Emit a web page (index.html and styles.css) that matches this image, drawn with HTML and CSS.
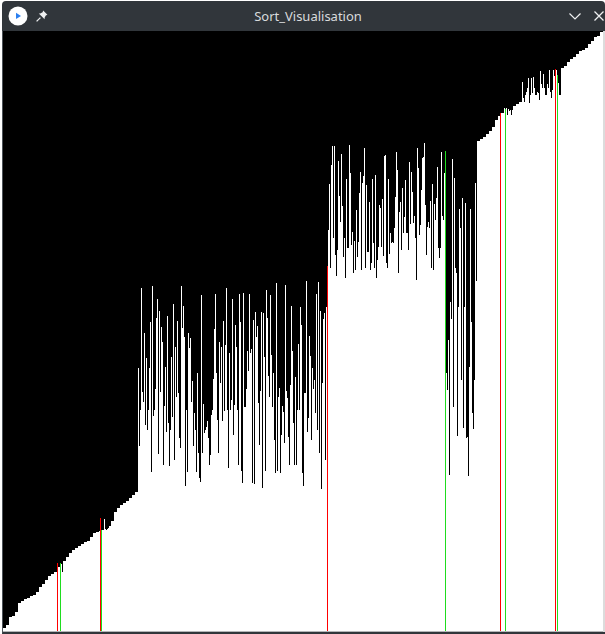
FILE: index.html

```html
<!DOCTYPE html>
<html lang="en">
<head>
    <meta charset="UTF-8">
    <title>Sort_Visualisation</title>
    <link rel="stylesheet" href="styles.css">
</head>
<body>

    <div class="window">
        <div class="titlebar">
            <div class="titlebar-left">
                <svg class="app-icon" width="20" height="20" viewBox="0 0 20 20">
                    <circle cx="10" cy="10" r="9.5" fill="#fff"/>
                    <path d="M8 6.8 L13 10 L8 13 Z" fill="#2b7ff0"/>
                </svg>
                <svg class="pin-icon" width="12" height="12" viewBox="0 0 12 12">
                    <path d="M7.2 .6 L11.4 4.8 L9.8 5.4 L8.6 7.8 L8.6 9.2 L2.8 3.4 L4.2 3.4 L6.6 2.2 Z" fill="#eff0f1"/>
                    <path d="M4.4 7.6 L.6 11.4" stroke="#eff0f1" stroke-width="1.3" fill="none"/>
                </svg>
            </div>
            <div class="title">Sort_Visualisation</div>
            <div class="titlebar-right">
                <svg width="12" height="7" viewBox="0 0 12 7">
                    <path d="M.5 .5 L6 6 L11.5 .5" stroke="#eff0f1" stroke-width="1.2" fill="none"/>
                </svg>
                <svg width="10" height="10" viewBox="0 0 10 10">
                    <path d="M.5 .5 L9.5 9.5 M9.5 .5 L.5 9.5" stroke="#eff0f1" stroke-width="1.3" fill="none"/>
                </svg>
            </div>
        </div>
        <div class="content">
            <div class="chart" id="chart"></div>
        </div>
    </div>

    <script src="script.js"></script>
</body>
</html>
```

FILE: styles.css

```css
html, body {
    margin: 0;
    padding: 0;
    height: 634px;
    overflow: hidden;
    background-color: #fff;
}
body {
    padding: 1px 0 0 2px;
    box-sizing: border-box;
}
.window {
    height: 633px;
    display: flex;
    flex-direction: column;
    background-color: #31363b;
    border-radius: 4px 4px 0 0;
}
.titlebar {
    height: 30px;
    display: grid;
    grid-template-columns: 60px 1fr 51px;
    align-items: center;
    color: #d9dbdd;
}
.titlebar-left {
    display: flex;
    align-items: center;
    padding-left: 6px;
    gap: 8px;
}
.titlebar-right {
    display: flex;
    align-items: center;
    justify-content: flex-end;
    gap: 13px;
    padding-right: 1px;
}
.title {
    text-align: center;
    font-family: "Noto Sans", sans-serif;
    font-size: 13px;
}
.content {
    height: 601px;
    display: flex;
    background-color: #dcdcdc;
    border-left: 1px solid #4d5359;
    border-bottom: 2px solid #31363b;
}
.chart {
    width: 600px;
    height: 600px;
    display: flex;
    align-items: flex-end;
    background-color: #000;
    border-bottom: 1px solid #b4b6b8;
}
.bar {
    width: 1px;
    flex: none;
    background-color: #fff;
}
.bar.red {
    background-color: #f00;
}
.bar.green {
    background-color: #1fdc1f;
}
```

FILE: script.js

```js
// top y of each column, read off the picture
const FIRST = 3, LAST = 602, BOTTOM = 631;

const stairs = [
    [3,628],[5,626],[8,622],[9,617],[13,615],[17,608],[18,603],[22,600],[28,597],[35,594],[38,588],[43,583],
    [48,576],[55,571],[58,565],[61,563],[65,558],[70,552],[75,548],[82,543],[88,540],[93,533],[103,530],
    [110,525],[113,513],[118,507],[127,500],[137,490],
    [477,141],[483,137],[488,132],[492,127],[495,120],[499,115],[502,112],[504,108],[510,110],[512,107],[518,103],
    [525,95],[558,95],[559,70],[565,65],[568,61],[573,57],[578,52],[585,48],[590,42],[593,38],[598,35],[600,32],[602,31]
];

const spikes = {
    62:572,104:519,106:530,108:528,
    507:115,509:111,511:115,522:82,524:102,526:92,527:88,528:78,529:103,531:78,532:93,533:77,534:88,537:92,538:93,
    539:100,540:71,541:84,542:88,543:74,544:88,547:84,548:88,549:70,550:92,551:98,552:90,553:70,554:76,556:70,558:83,

    138:368,139:446,141:288,142:392,143:402,144:333,145:425,146:358,147:430,149:368,150:322,151:472,152:286,153:416,
    155:389,156:318,157:299,158:454,159:311,160:392,161:327,162:342,163:465,164:406,165:367,166:432,167:316,168:423,
    169:466,170:430,171:357,172:417,173:304,174:460,175:347,176:397,177:321,178:393,179:438,180:448,181:286,182:328,
    183:306,184:337,185:486,187:472,188:333,189:348,190:338,191:402,192:381,193:446,194:413,195:430,196:472,197:373,
    198:453,199:478,200:482,201:295,202:453,203:404,204:433,205:430,206:427,207:421,208:438,209:465,210:455,211:415,
    213:379,214:329,215:294,216:373,217:420,218:453,219:342,220:383,221:347,222:421,223:321,224:411,225:345,226:288,
    228:468,229:353,

    231:400,232:299,233:435,234:405,235:325,236:347,238:465,239:294,240:322,241:471,242:483,243:293,244:407,245:407,
    246:389,247:351,248:371,249:294,250:353,251:349,252:483,253:320,254:484,255:312,256:337,257:326,258:403,259:445,
    260:391,261:312,262:488,263:313,264:357,265:471,266:290,267:318,268:376,269:397,270:295,271:355,272:407,273:373,
    274:440,275:473,276:283,277:471,278:397,279:388,280:473,281:435,282:406,283:412,284:443,285:285,286:391,287:398,
    288:437,289:465,290:385,291:306,292:351,293:423,294:465,295:377,296:465,298:344,300:307,301:325,302:473,303:486,
    304:393,305:393,306:281,307:432,308:418,309:336,310:356,311:440,312:368,313:389,314:380,315:413,316:294,317:430,
    318:282,319:453,320:311,321:489,322:383,323:319,324:313,325:460,326:307,

    328:230,329:184,330:268,331:165,332:146,333:238,334:146,335:255,336:276,337:250,338:161,339:196,340:222,341:154,
    342:206,343:257,344:238,345:278,346:179,347:248,348:248,349:145,350:173,351:245,352:232,353:273,354:241,355:270,
    356:210,357:257,358:242,359:193,360:172,361:270,362:183,363:176,364:148,365:268,366:185,367:252,368:252,369:202,
    370:270,371:263,372:179,373:243,374:268,375:175,376:278,377:260,378:247,379:205,380:208,381:247,382:199,383:256,
    384:156,385:155,386:263,387:268,388:179,389:254,390:233,391:243,392:242,393:243,394:228,395:197,396:152,397:170,
    398:273,399:212,400:202,401:250,402:188,403:233,404:217,405:180,406:233,407:233,408:250,409:162,410:224,411:172,
    412:192,413:223,414:216,415:238,416:280,417:148,418:168,419:235,420:225,421:190,422:158,423:157,424:143,425:205,
    426:255,427:227,428:222,429:228,430:201,431:268,432:184,433:270,434:204,435:220,436:198,437:167,438:248,439:258,
    440:248,441:152,442:216,443:220,444:173,

    446:373,447:390,448:340,449:475,450:302,451:319,452:159,453:407,454:178,455:268,456:273,457:436,458:307,459:209,
    460:228,461:380,462:198,463:428,464:307,465:203,466:438,467:437,468:476,469:367,470:209,471:322,472:413,473:429,
    474:380,475:183,476:281
};

const colored = {
    57:['red',563], 60:['green',563], 100:['red',518], 101:['green',530], 327:['red',266],
    445:['green',151], 500:['red',113], 505:['green',109], 555:['red',69], 557:['green',75]
};

function stairTop(x) {
    // the low end climbs in little steps, not a smooth slope
    const stepX = Math.max(FIRST, x - (x % 3));
    for (let i = 1; i < stairs.length; i++) {
        const a = stairs[i - 1], b = stairs[i];
        if (stepX <= b[0]) {
            return Math.round(a[1] + (b[1] - a[1]) * (stepX - a[0]) / (b[0] - a[0]));
        }
    }
    return 31;
}

function columnTop(x) {
    if (spikes[x]) return spikes[x];
    if (x > 137 && x < 327) return 410;
    if (x > 327 && x < 477) return 270;
    return stairTop(x);
}

const chart = document.getElementById('chart');
for (let x = FIRST; x <= LAST; x++) {
    const bar = document.createElement('div');
    bar.className = 'bar';
    let top = columnTop(x);
    if (colored[x]) {
        bar.className += ' ' + colored[x][0];
        top = colored[x][1];
    }
    bar.style.height = (BOTTOM - top) + 'px';
    chart.appendChild(bar);
}
```
